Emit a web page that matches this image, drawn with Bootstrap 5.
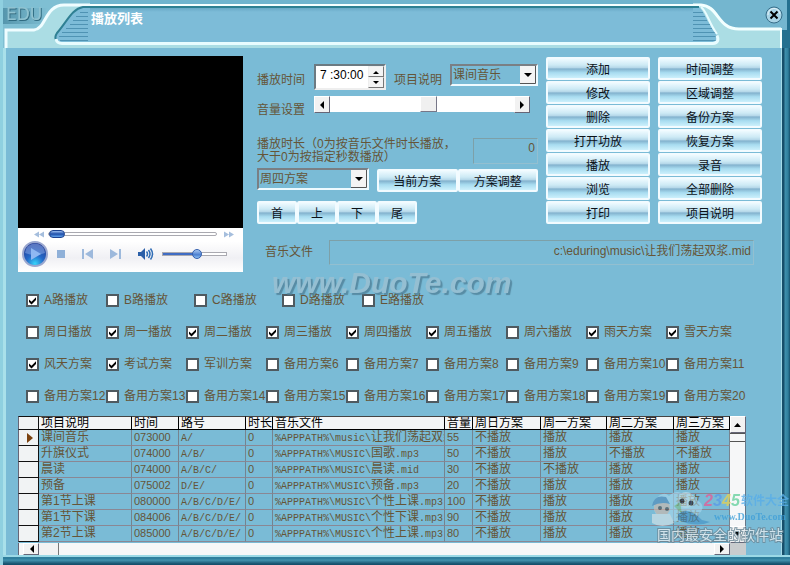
<!DOCTYPE html>
<html lang="zh-CN">
<head>
<meta charset="utf-8">
<meta name="viewport" content="width=device-width, initial-scale=1">
<title>播放列表</title>
<link href="https://cdn.jsdelivr.net/npm/bootstrap@5.3.0/dist/css/bootstrap.min.css" rel="stylesheet">
<script src="https://cdn.jsdelivr.net/npm/bootstrap@5.3.0/dist/js/bootstrap.bundle.min.js"></script>
<style>
:root { --ground: #7abbd6; --ink: #655538; --pale: #abdde4; }
body { font: 12px/16px "Liberation Sans", "Noto Sans CJK SC", sans-serif; color: var(--ink); background: var(--ground); }
.window { background: var(--ground); overflow: hidden; border-left: 3px solid #8fd0e0; }
.window-main { min-height: 0; border-left: 3px solid #a9e0ea; padding: 8px 28px 0 12px; background: linear-gradient(90deg, #a5dbe8 0 1px, #174f6b 1px 3px, #4090ad 4px, #2f7f9d 7px, #16506c) right / 9px 100% no-repeat; }
.window-foot { height: 10px; background: linear-gradient(#9bd9e6 0 2px, #2f7f9d 2px 4px, #4595b1 5px, #16506c 9px); }

/* title bar */
.title-bar { height: 48px; }
.title-mid { background: linear-gradient(#6fb4ce 0 4px, #f4ffff 4px 6px, #2c8093 6px 8px, #68a9c6 8px, #7dbcd8 12px 42px, #e8fcff 42px 45px, var(--pale) 45px); }
.title-mid h1 { font: bold 13px/16px "Noto Sans CJK SC", sans-serif; color: #fff; margin: 10px 0 0 1px; }
.title-end { width: 97px; }
.brand { font: 17px/17px "DejaVu Sans", sans-serif; fill: #8fc3d1; }
.brand-shade { fill: #356f86; }
.close-btn { top: 6px; right: 7px; width: 18px; height: 18px; }

/* player */
.player { width: 225px; }
.screen { height: 172px; background: #000; }
.player-controls { background: linear-gradient(#fff 0 30%, #f0f0f4 68%, #fff); height: 44px; }
.icon-btn { border: 0; background: none; padding: 0; line-height: 0; }
.player input[type=range] { appearance: none; -webkit-appearance: none; height: 12px; margin: 0; background: none; min-width: 0; }
.seek::-webkit-slider-runnable-track { height: 4px; border: 1px solid #a9a9b0; border-radius: 2px; background: #fff; }
.seek::-webkit-slider-thumb { -webkit-appearance: none; width: 16px; height: 8px; margin-top: -3px; border-radius: 4px; border: 1px solid #1c4391; background: linear-gradient(#9dc0f2, #1d4da8 50%, #64a5ee); }
.level::-webkit-slider-runnable-track { height: 4px; border: 1px solid #a9a9b0; background: linear-gradient(90deg, #3f6cc4 54%, #fff 54%); }
.level::-webkit-slider-thumb { -webkit-appearance: none; width: 10px; height: 10px; margin-top: -4px; border-radius: 5px; border: 1px solid #335fae; background: linear-gradient(#a9c8f2, #4c7fd0 60%, #8ec2f4); }

/* form controls */
.side { padding-left: 14px; }
.field { background: none; border: 1px solid; border-color: #7da0a8 #93bfd0 #93bfd0 #7da0a8; color: var(--ink); border-radius: 0; min-width: 0; }
.secs { width: 65px; padding-bottom: 7px; }
.file { height: 25px; padding-bottom: 7px; }
.pick { appearance: none; height: 22px; color: var(--ink); border: 2px solid; border-color: #7a7f84 #eefaff #eefaff #7a7f84; outline: 0; padding: 0 18px 0 1px;
  background: url("data:image/svg+xml,%3Csvg xmlns='http://www.w3.org/2000/svg' width='16' height='18'%3E%3Cpath fill='%23f4f4f4' d='M0 0h16v18H0z'/%3E%3Cpath fill='none' stroke='%23555' d='M15.5 0v17.5H0'/%3E%3Cpath d='M4 7h8l-4 4z'/%3E%3C/svg%3E") right center no-repeat; }
.pick-plan { width: 112px; }
.time-box { width: 72px; height: 26px; background: #fff; border: 2px solid; border-color: #6c7a82 #eee #eee #6c7a82; }
.time-box input { width: 50px; border: 0; padding: 0 0 4px 4px; font-size: 12px; color: #000; background: none; }
.spin button { width: 16px; height: 11px; border: 1px solid; border-color: #eee #777 #777 #eee; background: #f4f4f4; padding: 0; line-height: 0; }
.scroller { width: 216px; height: 17px; margin-top: 2px; }
.scroller button, .bar-btn { width: 16px; border: 1px solid; border-color: #fff #667 #667 #fff; background: #f2f2f2; padding: 0; line-height: 0; }
.scroller input { appearance: none; -webkit-appearance: none; background: #fff; min-width: 0; margin: 0; height: 16px; }
.scroller input::-webkit-slider-thumb { -webkit-appearance: none; width: 17px; height: 16px; background: #f0f0f0; border: 1px solid; border-color: #fff #778 #778 #fff; }
.cap { width: 57px; }
.controls { padding-top: 8px; }
.hint { line-height: 13px; }
.hint-row { padding-top: 20px; padding-bottom: 4px; }
.glossy { border: 2px solid #f2fbff; border-radius: 2px; color: #0b1118; height: 23px; margin-top: 1px; padding: 0; font: 12px/18px "Noto Sans CJK SC", sans-serif; background: linear-gradient(#eefaff, #cdeaf5 32%, #b3d6e8 47%, #82b1cd 52%, #a8dcf0 72%, #ccf0fc) padding-box; }
.actions { width: 216px; display: grid; grid-template-columns: 1fr 1fr; column-gap: 8px; align-content: start; }
.nav-btn { width: 40px; }

/* tick boxes */
.tick-area { margin-right: 8px; padding-top: 20px; }
.ticks { display: grid; grid-template-columns: repeat(9, 1fr); row-gap: 16px; padding: 0 8px; }
.ticks.channels { grid-template-columns: 10fr 11fr 11fr 10fr 48fr; }
.ticks label { display: flex; align-items: center; gap: 5px; white-space: nowrap; min-width: 0; }
.ticks input { appearance: none; width: 13px; height: 13px; flex: none; margin: 0; background: #fff; border: 2px solid #4f5a60; }
.ticks input:checked { background: #fff url("data:image/svg+xml,%3Csvg xmlns='http://www.w3.org/2000/svg' width='9' height='9'%3E%3Cpath d='M1 3.5v2.600L3.500 8.500 8 4V1.300L3.500 5.800z'/%3E%3C/svg%3E") center no-repeat; }

/* playlist */
.list { margin-right: 16px; }
.list-body { overflow: hidden; min-height: 0; }
.plan { table-layout: fixed; width: 100%; border-collapse: separate; border-spacing: 0; }
.plan th, .plan td { height: 16px; line-height: 14px; padding: 0 0 1px 2px; overflow: hidden; white-space: nowrap; border-right: 1px solid #75838f; border-bottom: 1px solid #8a8794; vertical-align: top; }
.plan thead th { height: 14px; line-height: 12px; padding-bottom: 0; font-weight: normal; color: #000; background: #f3f5f6; border-color: #000; }
.plan tr > :first-child { background: #f1f3f4; border-color: #111; border-left: 1px solid #667; }
.plan thead tr > * { border-top: 1px solid #444; }
.plan .mono { font-family: "Liberation Mono", monospace; font-size: 10px; }
.plan span.mono { line-height: 10px; }
.plan .num { font-size: 11px; }
.bar-v { width: 16px; background: #f6f7f8; border-right: 1px solid #678; }
.bar-v .bar-btn { height: 17px; }
.bar-v .thumb { height: 9px; border-top: 1px solid #555; border-bottom: 1px solid #555; }
.bar-h { height: 12px; background: #f6f7f8; border-left: 1px solid #667; }
.bar-h .bar-btn { height: 12px; }
.bar-h .thumb { width: 20px; border-right: 1px solid #777; background: #f2f2f2; }
.corner { width: 16px; background: #c8ccce; }

/* watermarks over the content */
.mark-site { left: 269px; top: 264px; font: italic bold 30px/38px "Liberation Sans", sans-serif; color: #9cc0d2; text-shadow: 2px 2px 1px #4f8098; opacity: .8; pointer-events: none; }
.mark-logo { right: 0; bottom: 20px; width: 142px; height: 60px; pointer-events: none; }
</style>
</head>
<body>
<div class="window vh-100 d-flex flex-column position-relative">
  <header class="title-bar d-flex flex-shrink-0 position-relative">
    <svg class="flex-shrink-0" width="87" height="48" viewBox="3 0 87 48" aria-hidden="true">
      <defs>
        <linearGradient id="lg" x1="0" x2="1"><stop offset="0" stop-color="#4b8ca3"/><stop offset="1" stop-color="#7ebdd2"/></linearGradient>
        <filter id="sh"><feDropShadow dx="1" dy="1" stdDeviation=".6" flood-color="#2f6a80"/></filter>
      </defs>
      <path fill="#7fbfd3" d="M3 0h87v48H3z"/>
      <path fill="url(#lg)" d="M3 8h44l-6 16H3z" opacity=".8"/>
      <path fill="#abdde4" d="M5 48V31h30C46 29 45 5 66 5h24v43z"/>
      <path fill="none" stroke="#effdff" stroke-width="3" d="M6 48V30h28c12-1 11-25 30-25h26"/>
      <path fill="#7dbcd8" d="M90 7H83C72 9 68 20 57 33c-3 5-1 9 4 9h29z"/>
      <path fill="none" stroke="#2f8093" stroke-width="2" d="M90 7h-7C72 9 68 20 57 33c-2 3-2 5-1 7"/>
      <path stroke="#4f93b3" d="M80 12.500h8M76 16.500h12M73 20.500h15M70 24.500h18M66 28.500h22M62 32.500h26M59 36.500h29M60 40.500h28"/>
      <path fill="none" stroke="#e8fcff" stroke-width="3" d="M56 39q1 4.500 6 4.500h28"/>
      <text class="brand" x="6" y="20" filter="url(#sh)">EDU</text>
    </svg>
    <div class="title-mid flex-grow-1"><h1>播放列表</h1></div>
    <svg class="title-end flex-shrink-0" height="48" viewBox="693 0 97 48" aria-hidden="true">
      <path fill="#74b6cf" d="M693 0h97v48h-97z"/>
      <path fill="#abdde4" d="M693 5h12c16 3 13 24 33 24h42v19h-87z"/>
      <path fill="none" stroke="#f2ffff" stroke-width="3" d="M693 5h8c18 1 16 24 38 24h42"/>
      <path fill="#7dbcd8" d="M693 7h6c5 4 8 15 17 27 3 6 2 8-3 8h-20z"/>
      <path stroke="#2c8093" stroke-width="2" d="M693 7h6"/>
      <path stroke="#4f93b3" d="M693 12.500h10M693 16.500h12M693 20.500h14M693 24.500h17M693 28.500h19M693 32.500h22M693 36.500h24M693 40.500h23"/>
      <path fill="none" stroke="#e8fcff" stroke-width="3" d="M693 43.500h20q7-1 4-8"/>
      <path fill="none" stroke="#e8fcff" stroke-width="2" d="M701 7c6 4 7 15 16 27"/>
      <path fill="#24708f" d="M782 30h8v18h-8zM787 0h3v48h-3z"/>
      <path stroke="#f2ffff" stroke-width="2" d="M781 28v20"/>
    </svg>
    <button class="close-btn icon-btn position-absolute" type="button" aria-label="关闭">
      <svg width="18" height="18"><circle cx="9" cy="9" r="8" fill="#a8d4e6" stroke="#376d88"/><path stroke="#fff" fill="none" opacity=".7" d="M3 9a6 6 0 0 1 12-1"/><path stroke="#000" stroke-width="2" d="M5.500 5.500l7 7m0-7l-7 7"/></svg>
    </button>
  </header>

  <main class="window-main flex-grow-1 d-flex flex-column">
    <div class="d-flex">
      <section class="player flex-shrink-0" aria-label="播放器">
        <div class="screen"></div>
        <div class="player-controls">
          <div class="d-flex align-items-center gap-1 px-2 ps-3">
            <button class="icon-btn" type="button" aria-label="快退"><svg width="10" height="12"><path fill="#a5bedd" d="M5 3.500v6L0 6.500zM10 3.500v6L5 6.500z"/></svg></button>
            <input class="seek flex-grow-1" type="range" min="0" max="100" value="0" aria-label="进度">
            <button class="icon-btn" type="button" aria-label="快进"><svg width="14" height="12"><path fill="#a5bedd" d="M3 3.500v6l5-3zM8 3.500v6l5-3z"/></svg></button>
          </div>
          <div class="d-flex align-items-center ps-1">
            <button class="icon-btn me-2" type="button" aria-label="播放"><svg width="26" height="28"><defs><radialGradient id="pg" cx=".5" cy=".9" r=".8"><stop offset="0" stop-color="#37d5fb"/><stop offset=".45" stop-color="#2469c8"/><stop offset="1" stop-color="#263f96"/></radialGradient></defs><circle cx="13" cy="14" r="12" fill="url(#pg)" stroke="#9aa7cf" stroke-width="2"/><path fill="#8fb0ec" opacity=".5" d="M3 13a10 9.500 0 0 1 20 0q-10 4-20 0z"/><path fill="#8fb8f2" d="M9 8l10 6-10 6z"/></svg></button>
            <button class="icon-btn me-3" type="button" aria-label="停止"><svg width="10" height="12"><path fill="#8fb0d8" d="M1 2h8v8H1z"/></svg></button>
            <button class="icon-btn me-3" type="button" aria-label="上一首"><svg width="12" height="12"><path fill="#9db9dc" d="M0 1h2v10H0zM11 1v10L3 6z"/></svg></button>
            <button class="icon-btn me-3" type="button" aria-label="下一首"><svg width="12" height="12"><path fill="#9db9dc" d="M0 1v10l8-5zM9 1h2v10H9z"/></svg></button>
            <button class="icon-btn me-2" type="button" aria-label="静音"><svg width="16" height="14"><path fill="#2b5fa8" d="M0 5h3l4-4v12L3 9H0z"/><path fill="none" stroke="#2f6cb5" stroke-width="1.500" d="M8.500 4.500q2 2.500 0 5M10.500 3q3 4 0 8M12.500 1.500q4 5.500 0 11"/></svg></button>
            <input class="level flex-grow-1 me-3" type="range" min="0" max="100" value="55" aria-label="音量">
          </div>
        </div>
      </section>

      <div class="side flex-grow-1">
        <div class="d-flex">
          <div class="controls flex-grow-1">
            <div class="d-flex align-items-start">
              <label class="cap pt-2" for="time">播放时间</label>
              <div class="time-box d-flex">
                <input id="time" type="text" value="7 :30:00">
                <span class="spin d-flex flex-column ms-auto">
                  <button type="button" aria-label="加"><svg width="6" height="4"><path d="M0 4h6L3 1z"/></svg></button>
                  <button type="button" aria-label="减"><svg width="6" height="4"><path d="M0 0h6L3 3z"/></svg></button>
                </span>
              </div>
              <label class="pt-2 ps-2" for="item">项目说明</label>
              <select class="pick flex-grow-1 ms-2 me-2" id="item"><option>课间音乐</option></select>
            </div>
            <div class="d-flex pt-1">
              <label class="cap pt-2" for="vol">音量设置</label>
              <div class="scroller d-flex">
                <button type="button" aria-label="减小"><svg width="6" height="8"><path d="M5 0v8L1 4z"/></svg></button>
                <input id="vol" class="flex-grow-1" type="range" min="0" max="100" value="54">
                <button type="button" aria-label="增大"><svg width="6" height="8"><path d="M1 0v8l4-4z"/></svg></button>
              </div>
            </div>
            <div class="hint-row d-flex me-2">
              <label class="hint flex-grow-1" for="secs">播放时长（0为按音乐文件时长播放，<br>大于0为按指定秒数播放）</label>
              <input id="secs" class="field secs text-end" type="text" value="0">
            </div>
            <div class="d-flex me-2">
              <select class="pick pick-plan" id="plan" aria-label="方案"><option>周四方案</option></select>
              <button class="glossy flex-fill ms-2" type="button">当前方案</button>
              <button class="glossy flex-fill" type="button">方案调整</button>
            </div>
            <div class="d-flex pt-2">
              <button class="glossy nav-btn" type="button">首</button>
              <button class="glossy nav-btn" type="button">上</button>
              <button class="glossy nav-btn" type="button">下</button>
              <button class="glossy nav-btn" type="button">尾</button>
            </div>
          </div>
          <div class="actions flex-shrink-0">
            <button class="glossy" type="button">添加</button><button class="glossy" type="button">时间调整</button>
            <button class="glossy" type="button">修改</button><button class="glossy" type="button">区域调整</button>
            <button class="glossy" type="button">删除</button><button class="glossy" type="button">备份方案</button>
            <button class="glossy" type="button">打开功放</button><button class="glossy" type="button">恢复方案</button>
            <button class="glossy" type="button">播放</button><button class="glossy" type="button">录音</button>
            <button class="glossy" type="button">浏览</button><button class="glossy" type="button">全部删除</button>
            <button class="glossy" type="button">打印</button><button class="glossy" type="button">项目说明</button>
          </div>
        </div>
        <div class="d-flex pt-3 ps-2 pe-2">
          <label class="pt-1 pe-3" for="file">音乐文件</label>
          <input id="file" class="field file flex-grow-1 text-end" type="text" value="c:\eduring\music\让我们荡起双浆.mid">
        </div>
      </div>
    </div>

    <div class="tick-area">
      <div class="ticks channels">
        <label><input type="checkbox" checked>A路播放</label><label><input type="checkbox">B路播放</label><label><input type="checkbox">C路播放</label><label><input type="checkbox">D路播放</label><label><input type="checkbox">E路播放</label>
      </div>
      <div class="ticks pt-3">
        <label><input type="checkbox">周日播放</label><label><input type="checkbox" checked>周一播放</label><label><input type="checkbox" checked>周二播放</label><label><input type="checkbox" checked>周三播放</label><label><input type="checkbox" checked>周四播放</label><label><input type="checkbox" checked>周五播放</label><label><input type="checkbox">周六播放</label><label><input type="checkbox" checked>雨天方案</label><label><input type="checkbox" checked>雪天方案</label>
        <label><input type="checkbox" checked>风天方案</label><label><input type="checkbox" checked>考试方案</label><label><input type="checkbox">军训方案</label><label><input type="checkbox">备用方案6</label><label><input type="checkbox">备用方案7</label><label><input type="checkbox">备用方案8</label><label><input type="checkbox">备用方案9</label><label><input type="checkbox">备用方案10</label><label><input type="checkbox">备用方案11</label>
        <label><input type="checkbox">备用方案12</label><label><input type="checkbox">备用方案13</label><label><input type="checkbox">备用方案14</label><label><input type="checkbox">备用方案15</label><label><input type="checkbox">备用方案16</label><label><input type="checkbox">备用方案17</label><label><input type="checkbox">备用方案18</label><label><input type="checkbox">备用方案19</label><label><input type="checkbox">备用方案20</label>
      </div>
    </div>

    <div class="list list-body d-flex flex-column flex-grow-1 mt-2 pt-1">
      <div class="d-flex flex-grow-1 list-body">
        <div class="flex-grow-1 list-body">
          <table class="plan">
            <colgroup><col width="21"><col width="93"><col width="47"><col width="67"><col width="27"><col width="172"><col width="28"><col width="68"><col width="66"><col width="67"><col width="56"></colgroup>
            <thead><tr><th></th><th>项目说明</th><th>时间</th><th>路号</th><th>时长</th><th>音乐文件</th><th>音量</th><th>周日方案</th><th>周一方案</th><th>周二方案</th><th>周三方案</th></tr></thead>
            <tbody>
              <tr><td class="text-center"><svg width="6" height="10"><path fill="#7b4210" d="M0 0v10l6-5z"/></svg></td><td>课间音乐</td><td class="num">073000</td><td><span class="mono">A/</span></td><td class="num">0</td><td><span class="mono">%APPPATH%\music\</span>让我们荡起双浆</td><td class="num">55</td><td>不播放</td><td>播放</td><td>播放</td><td>播放</td></tr>
              <tr><td></td><td>升旗仪式</td><td class="num">074000</td><td><span class="mono">A/B/</span></td><td class="num">0</td><td><span class="mono">%APPPATH%\MUSIC\</span>国歌<span class="mono">.mp3</span></td><td class="num">50</td><td>不播放</td><td>播放</td><td>不播放</td><td>不播放</td></tr>
              <tr><td></td><td>晨读</td><td class="num">074000</td><td><span class="mono">A/B/C/</span></td><td class="num">0</td><td><span class="mono">%APPPATH%\MUSIC\</span>晨读<span class="mono">.mid</span></td><td class="num">30</td><td>不播放</td><td>不播放</td><td>播放</td><td>播放</td></tr>
              <tr><td></td><td>预备</td><td class="num">075002</td><td><span class="mono">D/E/</span></td><td class="num">0</td><td><span class="mono">%APPPATH%\MUSIC\</span>预备<span class="mono">.mp3</span></td><td class="num">20</td><td>不播放</td><td>播放</td><td>播放</td><td>播放</td></tr>
              <tr><td></td><td>第1节上课</td><td class="num">080000</td><td><span class="mono">A/B/C/D/E/</span></td><td class="num">0</td><td><span class="mono">%APPPATH%\MUSIC\</span>个性上课<span class="mono">.mp3</span></td><td class="num">100</td><td>不播放</td><td>播放</td><td>播放</td><td>播放</td></tr>
              <tr><td></td><td>第1节下课</td><td class="num">084006</td><td><span class="mono">A/B/C/D/E/</span></td><td class="num">0</td><td><span class="mono">%APPPATH%\MUSIC\</span>个性下课<span class="mono">.mp3</span></td><td class="num">90</td><td>不播放</td><td>播放</td><td>播放</td><td>播放</td></tr>
              <tr><td></td><td>第2节上课</td><td class="num">085000</td><td><span class="mono">A/B/C/D/E/</span></td><td class="num">0</td><td><span class="mono">%APPPATH%\MUSIC\</span>个性上课<span class="mono">.mp3</span></td><td class="num">80</td><td>不播放</td><td>播放</td><td>播放</td><td>播放</td></tr>
            </tbody>
          </table>
        </div>
        <div class="bar-v flex-shrink-0 d-flex flex-column">
          <button class="bar-btn" type="button" aria-label="上滚"><svg width="8" height="5"><path d="M0 5h7L3.500 1z"/></svg></button>
          <div class="thumb"></div>
          <button class="bar-btn mt-auto" type="button" aria-label="下滚"><svg width="8" height="5"><path d="M0 0h7L3.500 4z"/></svg></button>
        </div>
      </div>
      <div class="bar-h d-flex flex-shrink-0">
        <button class="bar-btn ms-1" type="button" aria-label="左滚"><svg width="5" height="8"><path d="M5 0v8L1 4z"/></svg></button>
        <div class="thumb"></div>
        <button class="bar-btn ms-auto" type="button" aria-label="右滚"><svg width="5" height="8"><path d="M0 0v8l4-4z"/></svg></button>
        <div class="corner"></div>
      </div>
    </div>
  </main>
  <div class="window-foot flex-shrink-0"></div>

  <div class="mark-site position-absolute">www.DuoTe.com</div>
  <svg class="mark-logo position-absolute" viewBox="648 485 142 60" aria-hidden="true">
    <g opacity=".6">
      <path fill="#a9d8ee" d="M655 500q8-10 14-4 8-8 16 0 10-4 12 4 10 6 2 14-4 10-16 8l-22-2q-10-8-6-20z"/>
      <circle cx="662" cy="508" r="8" fill="#d6b9a8"/><path fill="#4c86b8" d="M652 506q2-12 14-9l4 7q-9-3-18 2z"/>
      <circle cx="660" cy="508" r="2" fill="#444"/><circle cx="667" cy="509" r="2" fill="#444"/>
      <path fill="#dfe7e9" d="M652 514h18l4 9q-12 6-22 0z"/>
      <circle cx="686" cy="500" r="8" fill="#c9e6ee"/><circle cx="682" cy="501" r="2.500" fill="#223"/><circle cx="691" cy="503" r="2.500" fill="#223"/>
      <path fill="#7fc08a" d="M674 506l6-4 2 12z"/><path fill="#3f8fc4" d="M678 514q10-8 24 6l8 2q-14 6-32-2z"/>
    </g>
    <g font-family="'Liberation Sans','Noto Sans CJK SC',sans-serif" font-weight="bold" opacity=".8">
      <g font-size="16" font-style="italic"><text x="704" y="506" fill="#e0609a">2</text><text x="713" y="506" fill="#5b9be8">3</text><text x="722" y="506" fill="#e2cf55">4</text><text x="731" y="506" fill="#69d2a0">5</text></g>
      <text x="741" y="505" font-size="12" fill="#59aee8">软件大全</text>
      <text x="714" y="520" font-size="10" font-family="'Liberation Serif',serif" fill="#3f9fd8">www.DuoTe.com</text>
    </g>
    <text x="657" y="540" font-size="14" font-family="'Noto Sans CJK SC',sans-serif" fill="#e8eff2" stroke="#6a8796" stroke-width="2" paint-order="stroke" opacity=".8">国内最安全的软件站</text>
  </svg>
</div>
</body>
</html>
